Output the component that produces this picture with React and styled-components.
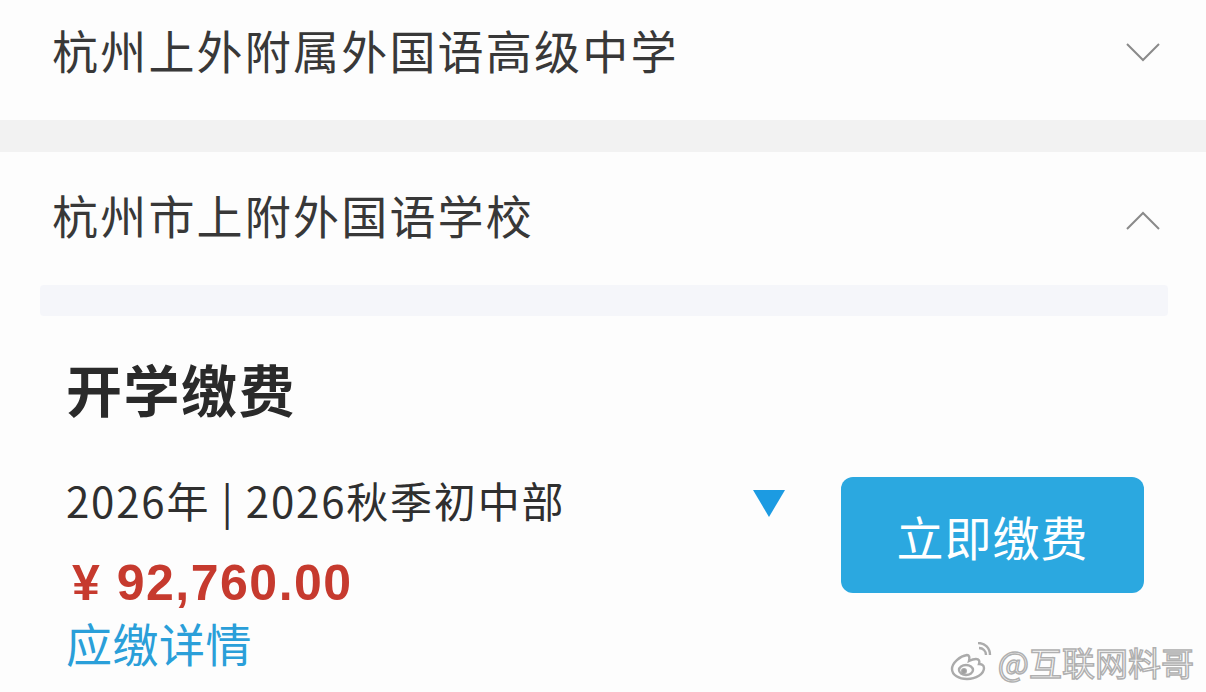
import React from "react";
import styled, { createGlobalStyle } from "styled-components";

const GlobalStyle = createGlobalStyle`
  html, body {
    margin: 0;
    padding: 0;
    background: #fdfdfd;
  }
  body {
    font-family: "Noto Sans CJK SC", "Noto Sans", sans-serif;
    color: #333;
  }
`;

const Page = styled.div`
  width: 1206px;
  height: 692px;
  overflow: hidden;
  position: relative;
  display: flex;
  flex-direction: column;
  background: #fdfdfd;
`;

const SchoolRow = styled.div`
  height: ${(p) => p.$h}px;
  box-sizing: border-box;
  padding: ${(p) => p.$top}px 46px 0 52px;
  display: flex;
  align-items: flex-start;
  justify-content: space-between;
`;

const SchoolName = styled.div`
  font-size: 46px;
  line-height: 56px;
  letter-spacing: 2.2px;
  color: #383838;
`;

const Chevron = styled.svg`
  width: 34px;
  height: 20px;
  margin-top: ${(p) => p.$mt}px;
`;

const Gap = styled.div`
  height: 32px;
  background: #f2f2f2;
`;

const InnerBand = styled.div`
  height: 31px;
  margin: 0 38px 0 40px;
  border-radius: 4px;
  background: #f5f6fa;
`;

const Payment = styled.div`
  padding: 40px 62px 0 66px;
`;

const Title = styled.div`
  font-size: 56px;
  line-height: 64px;
  font-weight: 700;
  color: #2a2a2a;
  letter-spacing: 1.5px;
`;

const Body = styled.div`
  display: flex;
  align-items: flex-start;
  margin-top: 52px;
`;

const Info = styled.div`
  flex: 1;
  display: flex;
  flex-direction: column;
`;

const MetaRow = styled.div`
  display: flex;
  align-items: flex-start;
  justify-content: space-between;
  padding-right: 56px;
`;

const Meta = styled.div`
  font-size: 42px;
  line-height: 56px;
  letter-spacing: 1.8px;
  color: #2f2f2f;
`;

const Triangle = styled.div`
  width: 0;
  height: 0;
  margin-top: 18px;
  border-left: 16px solid transparent;
  border-right: 16px solid transparent;
  border-top: 27px solid #1c9be2;
`;

const Price = styled.div`
  margin-top: 29px;
  padding-left: 6px;
  font-family: "Liberation Sans", Arial, sans-serif;
  font-size: 50px;
  line-height: 52px;
  font-weight: 700;
  color: #c63a2e;
  letter-spacing: 1.5px;
`;

const DetailLink = styled.a`
  margin-top: 5px;
  font-size: 46px;
  line-height: 56px;
  letter-spacing: 0.5px;
  color: #2a9fd9;
  text-decoration: none;
`;

const PayButton = styled.button`
  width: 303px;
  height: 116px;
  margin-top: 5px;
  border: none;
  border-radius: 12px;
  background: #2ba8e0;
  color: #fff;
  font-family: inherit;
  font-size: 47px;
  letter-spacing: 1px;
  cursor: pointer;
`;

const Watermark = styled.div`
  position: absolute;
  right: 12px;
  bottom: 10px;
  display: flex;
  align-items: center;
  gap: 6px;
  font-size: 33px;
  line-height: 40px;
  color: rgba(255, 255, 255, 0.9);
  -webkit-text-stroke: 1.5px rgba(150, 150, 150, 0.75);
`;

const WeiboIcon = () => (
  <svg width="44" height="40" viewBox="0 0 44 40">
    <g fill="none" stroke="rgba(150,150,150,0.8)" strokeWidth="2.4">
      <path d="M19 13c-7 1-15 8-15 14 0 6 7 10 15 10 9 0 17-5 17-11 0-3-3-4-5-4 1-3 0-5-3-5-2 0-5 1-7 2 1-4 0-6-2-6z" fill="#fff" />
      <ellipse cx="18" cy="28" rx="7" ry="5" />
      <circle cx="16" cy="29" r="1.8" fill="rgba(150,150,150,0.8)" />
      <path d="M31 6c4 0 7 3 7 7" />
      <path d="M30 1c7 0 12 5 12 12" />
    </g>
  </svg>
);

const ChevronDown = () => (
  <Chevron $mt={21} viewBox="0 0 34 20">
    <path d="M1 2 L17 18 L33 2" fill="none" stroke="#8a8a8a" strokeWidth="2" />
  </Chevron>
);

const ChevronUp = () => (
  <Chevron $mt={25} viewBox="0 0 34 20">
    <path d="M1 18 L17 2 L33 18" fill="none" stroke="#8a8a8a" strokeWidth="2" />
  </Chevron>
);

export default function App() {
  return (
    <Page>
      <GlobalStyle />
      <SchoolRow $h={120} $top={21}>
        <SchoolName>杭州上外附属外国语高级中学</SchoolName>
        <ChevronDown />
      </SchoolRow>
      <Gap />
      <SchoolRow $h={133} $top={34}>
        <SchoolName>杭州市上附外国语学校</SchoolName>
        <ChevronUp />
      </SchoolRow>
      <InnerBand />
      <Payment>
        <Title>开学缴费</Title>
        <Body>
          <Info>
            <MetaRow>
              <Meta>2026年 | 2026秋季初中部</Meta>
              <Triangle />
            </MetaRow>
            <Price>¥ 92,760.00</Price>
            <DetailLink href="#">应缴详情</DetailLink>
          </Info>
          <PayButton>立即缴费</PayButton>
        </Body>
      </Payment>
      <Watermark>
        <WeiboIcon />
        <span>@互联网料哥</span>
      </Watermark>
    </Page>
  );
}
